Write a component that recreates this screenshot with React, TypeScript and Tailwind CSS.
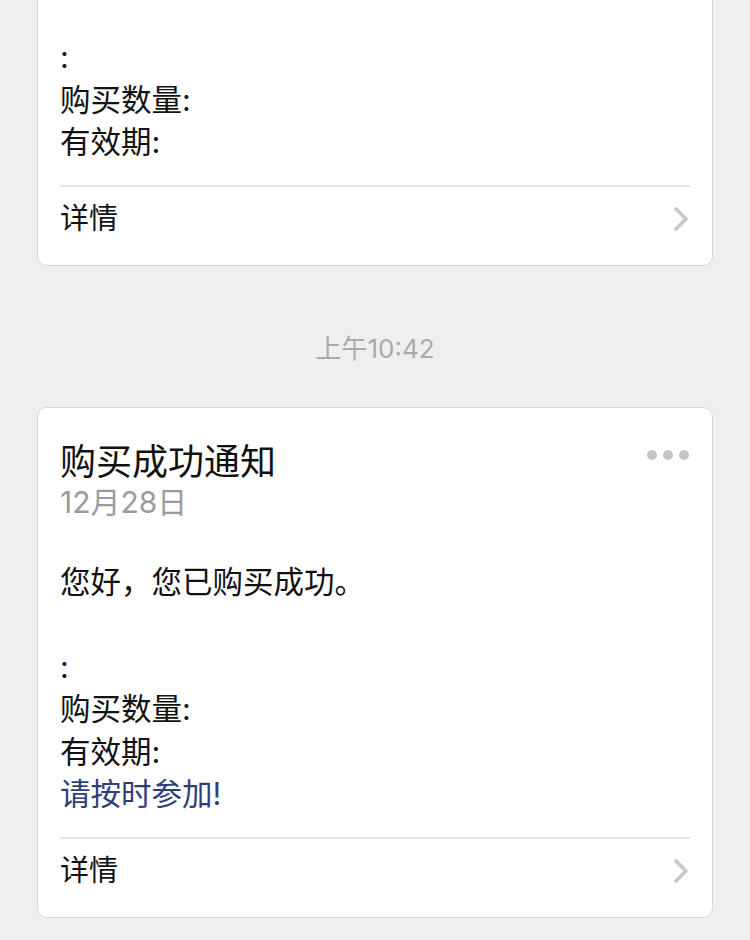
import React from 'react';

const font = { fontFamily: '"Inter", "Noto Sans CJK SC", sans-serif' };

function Chevron() {
  return (
    <svg width="18" height="26" viewBox="0 0 18 26" className="shrink-0">
      <path d="M4 3 L14 13 L4 23" fill="none" stroke="#c7c7cc" strokeWidth="3.8" strokeLinecap="round" strokeLinejoin="round" />
    </svg>
  );
}

function Footer() {
  return (
    <div className="mx-[22px] border-t-2 border-[#e5e5e5] pt-[12px] pb-[26px] flex items-center justify-between">
      <span className="text-[29px] leading-[40px] text-[#111]">详情</span>
      <Chevron />
    </div>
  );
}

interface Line {
  text: string;
  blue?: boolean;
}

function Body({ lines }: { lines: Line[] }) {
  return (
    <div className="px-[22px] pb-[21px] text-[30.5px] leading-[42.5px] text-[#111]">
      {lines.map((l, i) => (
        <div key={i} className={l.blue ? 'text-[#2f3d7c]' : ''}>
          {l.text || '\u00a0'}
        </div>
      ))}
    </div>
  );
}

export default function App() {
  return (
    <div className="min-h-screen w-full bg-[#efeff0] overflow-hidden" style={font}>
      <div className="px-[37px]">
        {/* previous message, cut off at the top */}
        <div className="mt-[-20px] bg-white rounded-[10px] border border-[#d6d6d6] pt-[55px]">
          <Body lines={[{ text: ':' }, { text: '购买数量:' }, { text: '有效期:' }]} />
          <Footer />
        </div>

        <div className="h-[141px] flex items-center justify-center pt-[24px]">
          <span className="text-[26px] text-[#aaaaaa]">上午10:42</span>
        </div>

        <div className="bg-white rounded-[10px] border border-[#d6d6d6]">
          <div className="px-[22px] pt-[32px] flex items-start justify-between">
            <div>
              <div className="text-[36px] leading-[44px] text-[#111]">购买成功通知</div>
              <div className="text-[30px] leading-[36px] text-[#9b9b9b]">12月28日</div>
            </div>
            <div className="flex gap-[6px] pt-[10px] pr-[1px]">
              <span className="w-[10px] h-[10px] rounded-full bg-[#c4c4c4]" />
              <span className="w-[10px] h-[10px] rounded-full bg-[#c4c4c4]" />
              <span className="w-[10px] h-[10px] rounded-full bg-[#c4c4c4]" />
            </div>
          </div>
          <div className="h-[41px]" />
          <Body
            lines={[
              { text: '您好，您已购买成功。' },
              { text: '' },
              { text: ':' },
              { text: '购买数量:' },
              { text: '有效期:' },
              { text: '请按时参加!', blue: true },
            ]}
          />
          <Footer />
        </div>
      </div>
    </div>
  );
}
